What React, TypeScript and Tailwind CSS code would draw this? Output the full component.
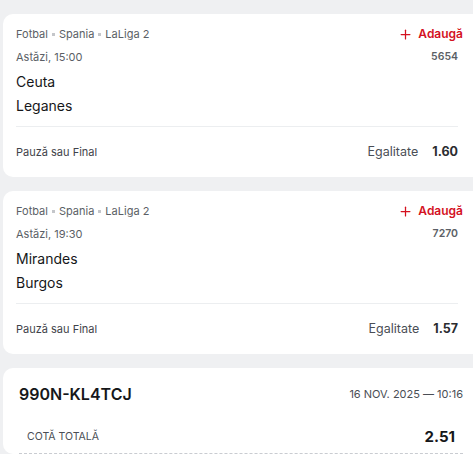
import { Plus } from 'lucide-react';

type Match = {
  time: string;
  code: string;
  home: string;
  away: string;
  odd: string;
};

const matches: Match[] = [
  { time: 'Astăzi, 15:00', code: '5654', home: 'Ceuta', away: 'Leganes', odd: '1.60' },
  { time: 'Astăzi, 19:30', code: '7270', home: 'Mirandes', away: 'Burgos', odd: '1.57' },
];

function Dot() {
  return <span className="mx-[4px] inline-block size-[3px] translate-y-[-2px] bg-[#c4c6ca]" />;
}

function MatchCard({ m }: { m: Match }) {
  return (
    <div className="h-[164px] rounded-l-[10px] bg-white pl-[13px] pr-[15px] pt-[12px]">
      <div className="flex h-[16px] items-center justify-between">
        <div className="text-[11px] text-[#5b5f66]">
          Fotbal
          <Dot />
          Spania
          <Dot />
          LaLiga 2
        </div>
        <button type="button" className="-mr-[5px] flex items-center gap-[5px] text-[12px] font-semibold text-[#d4111f]">
          <Plus className="size-[15px]" strokeWidth={2} />
          Adaugă
        </button>
      </div>
      <div className="mt-[7px] flex h-[16px] items-center justify-between">
        <span className="text-[11px] text-[#5b5f66]">{m.time}</span>
        <span className="text-[10.5px] font-semibold text-[#5b5f66]">{m.code}</span>
      </div>
      <div className="mt-[5px] text-[14px] leading-[24px] text-[#16171a]">{m.home}</div>
      <div className="text-[14px] leading-[24px] text-[#16171a]">{m.away}</div>
      <div className="mt-[8px] flex h-[51px] items-center justify-between border-t border-[#eceef0]">
        <span className="text-[11px] text-[#3f434a]">Pauză sau Final</span>
        <div className="flex items-center gap-[14px]">
          <span className="text-[12.5px] text-[#4a4e55]">Egalitate</span>
          <span className="text-[12.5px] font-bold text-[#2a2c30]">{m.odd}</span>
        </div>
      </div>
    </div>
  );
}

export default function App() {
  return (
    <div className="flex h-[454px] flex-col gap-[14px] overflow-hidden bg-[#eff0f2] pl-[3px] pt-[14px] font-['Inter',sans-serif]">
      {matches.map((m) => (
        <MatchCard key={m.code} m={m} />
      ))}
      <div className="shrink-0 rounded-l-[10px] bg-white pl-[16px] pr-[10px] pt-[16px]">
        <div className="flex h-[20px] items-center justify-between">
          <span className="text-[16px] font-semibold text-[#16171a]">990N-KL4TCJ</span>
          <span className="text-[11px] text-[#4a4e55]">16 NOV. 2025 — 10:16</span>
        </div>
        <div className="mt-[23px] flex h-[27px] items-start justify-between border-b border-dashed border-[#c9ccd1] pl-[8px] pr-[8px]">
          <span className="flex h-[20px] items-center text-[10.5px] text-[#4a4e55]">COTĂ TOTALĂ</span>
          <span className="flex h-[20px] items-center text-[15px] font-bold text-[#16171a]">2.51</span>
        </div>
      </div>
    </div>
  );
}
